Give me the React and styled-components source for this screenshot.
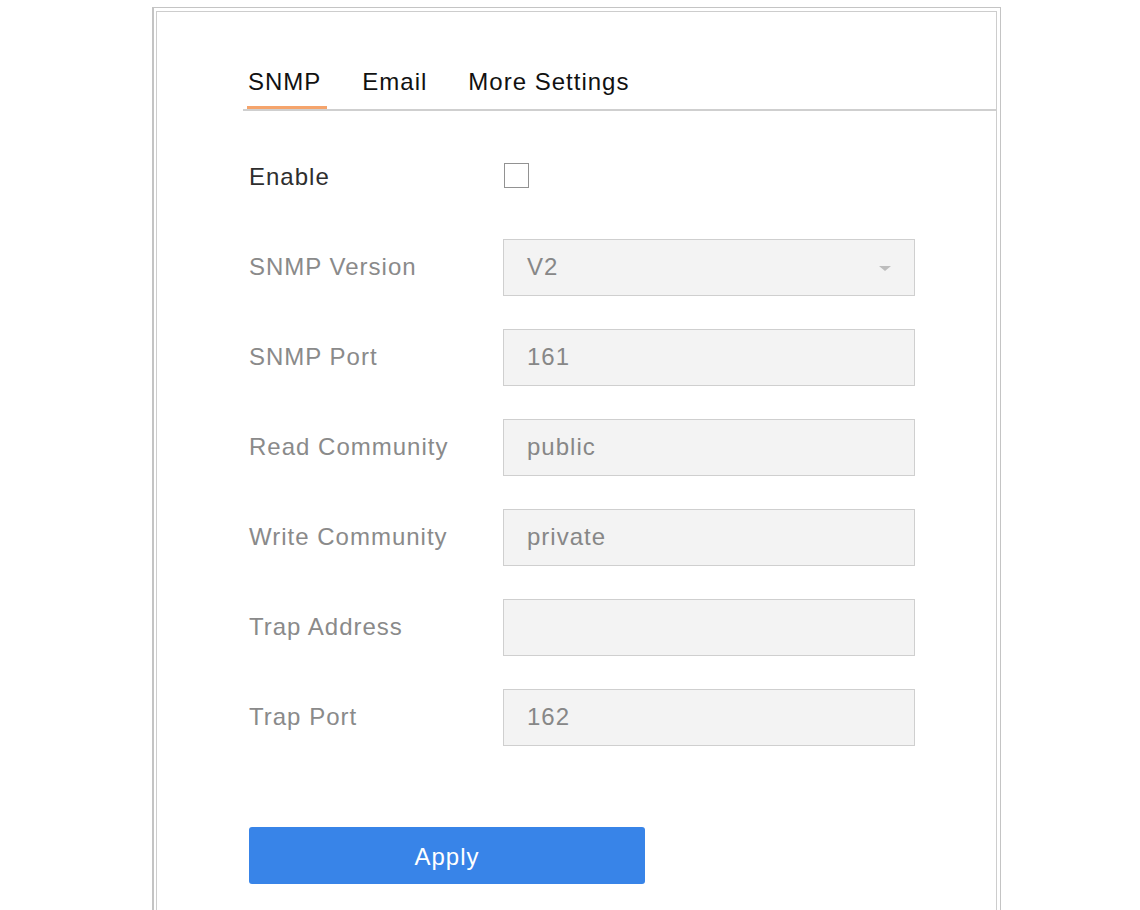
import React from "react";
import styled, { createGlobalStyle } from "styled-components";

const Global = createGlobalStyle`
  html, body {
    margin: 0;
    padding: 0;
    background: #ffffff;
    overflow: hidden;
  }
  body {
    font-family: "Liberation Sans", Arial, sans-serif;
  }
`;

const fields = [
  { label: "SNMP Version", value: "V2", select: true },
  { label: "SNMP Port", value: "161" },
  { label: "Read Community", value: "public" },
  { label: "Write Community", value: "private" },
  { label: "Trap Address", value: "" },
  { label: "Trap Port", value: "162" },
];

const tabs = ["SNMP", "Email", "More Settings"];

const App = () => {
  return (
    <Page>
      <Global />
      <Outer>
        <Inner>
          <TabBar>
            {tabs.map((t, i) => (
              <Tab key={t} active={i === 0}>
                {t}
              </Tab>
            ))}
          </TabBar>

          <Form>
            <Row>
              <Label strong>Enable</Label>
              <Check />
            </Row>
            {fields.map((f) => (
              <Row key={f.label}>
                <Label>{f.label}</Label>
                <Field>
                  {f.value}
                  {f.select && <Caret />}
                </Field>
              </Row>
            ))}
            <Apply>Apply</Apply>
          </Form>
        </Inner>
      </Outer>
    </Page>
  );
};
export default App;

const Page = styled.div`
  padding: 7px 0 0 152px;
  height: 910px;
  box-sizing: border-box;
`;

const Outer = styled.div`
  width: 849px;
  min-height: 960px;
  box-sizing: border-box;
  border: 1px solid #c4c4c4;
  border-left: 2px solid #c4c4c4;
  padding: 3px 3px 0 2px;
  display: flex;
`;

const Inner = styled.div`
  flex: 1;
  border: 1px solid #cdcdcd;
  padding-top: 58px;
`;

const TabBar = styled.div`
  display: flex;
  margin-left: 86px;
  padding-left: 4px;
  border-bottom: 2px solid #cfcfcf;
`;

const Tab = styled.div`
  padding: 0 6px 12px 1px;
  margin-right: 34px;
  font-size: 24px;
  line-height: 24px;
  letter-spacing: 1px;
  color: #111111;
  border-bottom: 3px solid ${(p) => (p.active ? "#f5a46c" : "transparent")};
`;

const Form = styled.div`
  display: flex;
  flex-direction: column;
  padding: 21px 0 0 92px;
`;

const Row = styled.div`
  display: flex;
  align-items: center;
  height: 90px;
`;

const Label = styled.div`
  width: 254px;
  font-size: 24px;
  letter-spacing: 1px;
  color: ${(p) => (p.strong ? "#2e2e2e" : "#8a8a8a")};
`;

const Check = styled.div`
  width: 25px;
  height: 25px;
  box-sizing: border-box;
  border: 1.5px solid #929292;
  margin: -3px 0 0 1px;
`;

const Field = styled.div`
  position: relative;
  width: 412px;
  height: 57px;
  box-sizing: border-box;
  border: 1px solid #cfcfcf;
  background: #f3f3f3;
  display: flex;
  align-items: center;
  padding-left: 23px;
  font-size: 24px;
  letter-spacing: 1px;
  color: #878787;
`;

const Caret = styled.span`
  position: absolute;
  right: 23px;
  top: 26px;
  width: 0;
  height: 0;
  border-left: 6px solid transparent;
  border-right: 6px solid transparent;
  border-top: 5px solid #bdbdbd;
`;

const Apply = styled.button`
  margin-top: 65px;
  width: 396px;
  height: 57px;
  padding-top: 3px;
  border: none;
  border-radius: 3px;
  background: #3884e8;
  color: #ffffff;
  font-family: "Liberation Sans", Arial, sans-serif;
  font-size: 24px;
  letter-spacing: 1px;
  cursor: pointer;
`;
